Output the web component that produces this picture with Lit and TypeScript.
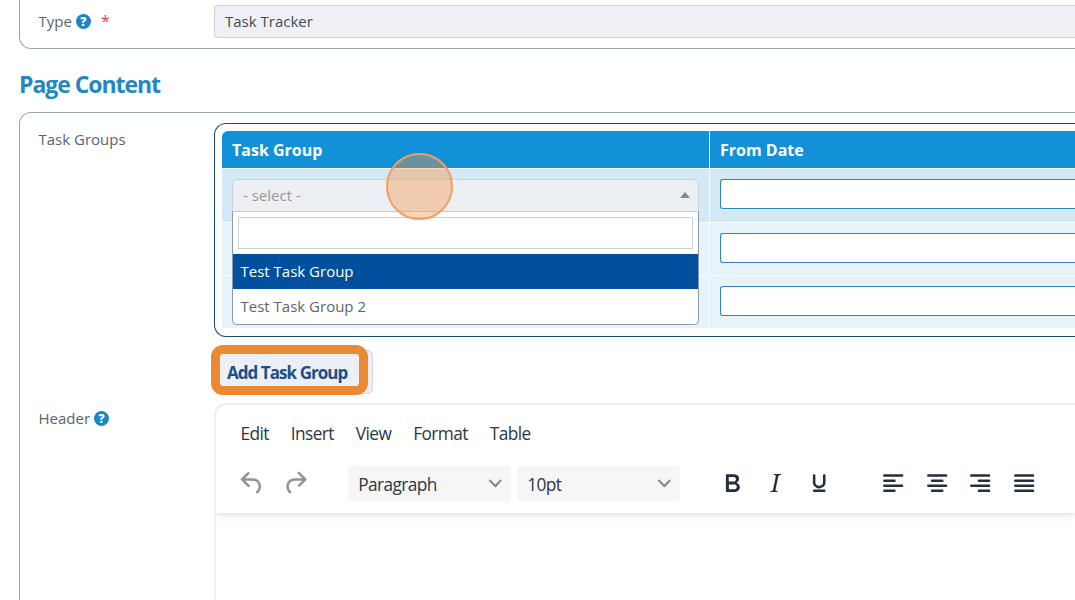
import { LitElement, html, css, svg } from "lit"
import { customElement, property } from "lit/decorators.js"
import { classMap } from "lit/directives/class-map.js"

const ICONS: Record<string, string> = {
  undo: "M6.4 8H12c3.7 0 6.2 2 6.8 5.1.6 2.7-.4 5.6-2.3 6.8a1 1 0 0 1-1-1.8c1.1-.6 1.8-2.7 1.4-4.6-.5-2.1-2.1-3.5-4.9-3.5H6.4l3.3 3.3a1 1 0 1 1-1.4 1.4l-5-5a1 1 0 0 1 0-1.4l5-5a1 1 0 0 1 1.4 1.4L6.4 8Z",
  redo: "M17.6 10H12c-2.8 0-4.4 1.4-4.9 3.5-.4 2 .3 4 1.4 4.6a1 1 0 1 1-1 1.8c-2-1.2-2.9-4.1-2.3-6.8.6-3 3-5.1 6.8-5.1h5.6l-3.3-3.3a1 1 0 1 1 1.4-1.4l5 5a1 1 0 0 1 0 1.4l-5 5a1 1 0 0 1-1.4-1.4l3.3-3.3Z",
  bold: "M7.8 19c-.3 0-.5 0-.6-.2l-.2-.5V5.7c0-.2 0-.4.2-.5l.6-.2h5c1.5 0 2.7.3 3.5 1 .7.6 1.1 1.4 1.1 2.5a3 3 0 0 1-.6 1.9c-.4.6-1 1-1.6 1.2.4.1.9.3 1.3.6s.8.7 1 1.2c.4.4.5 1 .5 1.6 0 1.3-.4 2.3-1.3 3-.8.7-2.1 1-3.8 1H7.8Zm5-8.3c.6 0 1.2-.1 1.6-.5.4-.3.6-.7.6-1.3 0-1.1-.8-1.7-2.3-1.7H9.3v3.5h3.4Zm.5 6c.7 0 1.3-.1 1.7-.4.4-.4.6-.9.6-1.5s-.2-1-.7-1.4c-.4-.3-1-.4-2-.4H9.4v3.8h4Z",
  italic: "m16.7 4.7-.1.9h-.3c-.6 0-1 0-1.4.3-.3.3-.4.6-.5 1.1l-2.1 9.8v.6c0 .5.4.8 1.4.8h.2l-.2.8H8l.2-.8h.2c1.1 0 1.8-.5 2-1.5l2-9.8.1-.5c0-.6-.4-.8-1.4-.8h-.3l.2-.9h5.8Z",
  underline: "M16 5c.6 0 1 .4 1 1v5.5a4 4 0 0 1-.4 1.8l-1 1.4a5.3 5.3 0 0 1-5.5 1 5 5 0 0 1-1.6-1c-.5-.4-.8-.9-1.1-1.4a4 4 0 0 1-.4-1.8V6c0-.6.4-1 1-1s1 .4 1 1v5.5c0 .3 0 .6.2 1l.6.7a3.3 3.3 0 0 0 2.2.8 3.4 3.4 0 0 0 2.2-.8c.3-.2.4-.4.6-.8l.2-.9V6c0-.6.4-1 1-1ZM8 17h8c.6 0 1 .4 1 1s-.4 1-1 1H8a1 1 0 0 1 0-2Z",
  left: "M5 5h14a1 1 0 0 1 0 2H5a1 1 0 1 1 0-2Zm0 4h8a1 1 0 0 1 0 2H5a1 1 0 1 1 0-2Zm0 8h8a1 1 0 0 1 0 2H5a1 1 0 0 1 0-2Zm0-4h14a1 1 0 0 1 0 2H5a1 1 0 0 1 0-2Z",
  center: "M5 5h14a1 1 0 0 1 0 2H5a1 1 0 1 1 0-2Zm3 4h8a1 1 0 0 1 0 2H8a1 1 0 1 1 0-2Zm0 8h8a1 1 0 0 1 0 2H8a1 1 0 0 1 0-2Zm-3-4h14a1 1 0 0 1 0 2H5a1 1 0 0 1 0-2Z",
  right: "M5 5h14a1 1 0 0 1 0 2H5a1 1 0 1 1 0-2Zm6 4h8a1 1 0 0 1 0 2h-8a1 1 0 0 1 0-2Zm0 8h8a1 1 0 0 1 0 2h-8a1 1 0 0 1 0-2Zm-6-4h14a1 1 0 0 1 0 2H5a1 1 0 0 1 0-2Z",
  justify: "M5 5h14a1 1 0 0 1 0 2H5a1 1 0 1 1 0-2Zm0 4h14a1 1 0 0 1 0 2H5a1 1 0 1 1 0-2Zm0 4h14a1 1 0 0 1 0 2H5a1 1 0 0 1 0-2Zm0 4h14a1 1 0 0 1 0 2H5a1 1 0 0 1 0-2Z",
}

@customElement("help-icon")
export class HelpIcon extends LitElement {
  static styles = css`
    :host {
      display: flex;
      align-items: center;
      justify-content: center;
      width: 15px;
      height: 15px;
      margin-top: 1px;
      border-radius: 50%;
      background: #1c86c2;
      color: #fff;
      font: 800 12px/15px "Open Sans", sans-serif;
    }
  `

  render() {
    return html`?`
  }
}

@customElement("rich-editor")
export class RichEditor extends LitElement {
  static styles = css`
    :host {
      display: block;
      box-sizing: border-box;
      border: 2px solid #eee;
      border-right: none;
      border-bottom: none;
      border-top-left-radius: 12px;
      background: #fff;
      color: #2b3744;
      font-family: "Open Sans", sans-serif;
      font-size: 17.3px;
      letter-spacing: -0.6px;
      overflow: hidden;
    }

    .header {
      height: 108px;
      box-shadow: 0 2px 3px rgba(34, 47, 62, 0.08), 0 5px 8px rgba(34, 47, 62, 0.05);
    }

    .menubar {
      display: flex;
      gap: 22px;
      height: 57px;
      padding-left: 24.5px;
      line-height: 57px;
    }

    .toolbar {
      display: flex;
      align-items: center;
      height: 43px;
      padding-left: 14px;
    }

    .group {
      display: flex;
    }

    .group + .group {
      margin-left: 30.5px;
    }

    .tool {
      display: flex;
      justify-content: center;
      width: 43.6px;
    }

    .tool svg {
      width: 30.4px;
      height: 30.4px;
      fill: #222f3e;
    }

    .tool.disabled svg {
      fill: #909498;
    }

    .group.selects {
      gap: 6px;
    }

    .select {
      display: flex;
      align-items: center;
      justify-content: space-between;
      box-sizing: border-box;
      width: 163px;
      height: 35px;
      padding: 0 9px 0 10.5px;
      border-radius: 4px;
      background: #f6f6f7;
    }

    .select span {
      padding-top: 2px;
    }

    .select svg {
      width: 12.7px;
      height: 12.7px;
      fill: #858a91;
    }
  `

  _tool(name: string, disabled = false) {
    return html`
      <div class=${classMap({ tool: true, disabled })}>
        <svg viewBox="0 0 24 24">${svg`<path d=${ICONS[name]} />`}</svg>
      </div>
    `
  }

  _select(label: string) {
    return html`
      <div class="select">
        <span>${label}</span>
        <svg viewBox="0 0 10 10">
          <path d="M8.7 2.2c.3-.3.8-.3 1 0 .4.4.4.9 0 1.2L5.7 7.8c-.3.3-.9.3-1.2 0L.2 3.4a.8.8 0 0 1 0-1.2c.3-.3.8-.3 1.1 0L5 6l3.7-3.8Z" />
        </svg>
      </div>
    `
  }

  render() {
    return html`
      <div class="header">
        <div class="menubar">
          ${["Edit", "Insert", "View", "Format", "Table"].map((m) => html`<span>${m}</span>`)}
        </div>
        <div class="toolbar">
          <div class="group">${this._tool("undo", true)}${this._tool("redo", true)}</div>
          <div class="group selects">${this._select("Paragraph")}${this._select("10pt")}</div>
          <div class="group">${["bold", "italic", "underline"].map((i) => this._tool(i))}</div>
          <div class="group">${["left", "center", "right", "justify"].map((i) => this._tool(i))}</div>
        </div>
      </div>
    `
  }
}

@customElement("group-select")
export class GroupSelect extends LitElement {
  @property({ type: Array }) options: string[] = []
  @property({ type: Number }) active = 0

  static styles = css`
    :host {
      display: block;
      position: relative;
      font-size: 15px;
    }

    .trigger {
      display: flex;
      align-items: center;
      justify-content: space-between;
      box-sizing: border-box;
      height: 33px;
      padding: 0 8px 1px 10px;
      border: 1px solid #cdd3dc;
      border-radius: 4px 4px 0 0;
      background: #eceff4;
      color: #999;
    }

    .arrow {
      border: 5px solid transparent;
      border-top: none;
      border-bottom: 6px solid #888;
    }

    .dropdown {
      position: absolute;
      top: 32px;
      left: 0;
      right: 0;
      z-index: 1;
      box-sizing: border-box;
      height: 114px;
      border: 1px solid #8d9aa5;
      border-top-color: #c3c9d0;
      border-radius: 0 0 5px 5px;
      background: #fff;
      overflow: hidden;
    }

    .search {
      box-sizing: border-box;
      height: 32px;
      margin: 5px;
      border: 1px solid #c9d1d8;
    }

    .option {
      height: 35px;
      padding-left: 7.5px;
      line-height: 35px;
      color: #5f666c;
    }

    .option.active {
      background: #00509d;
      color: #fff;
    }
  `

  render() {
    return html`
      <div class="trigger"><span>- select -</span><span class="arrow"></span></div>
      <div class="dropdown">
        <div class="search"></div>
        ${this.options.map(
          (option, i) => html`
            <div class=${classMap({ option: true, active: i === this.active })}>${option}</div>
          `,
        )}
      </div>
    `
  }
}

@customElement("app-root")
export class AppRoot extends LitElement {
  static styles = css`
    :host {
      display: block;
      position: relative;
      height: 600px;
      overflow: hidden;
      background: #fff;
      color: #5c646b;
      font-family: "Open Sans", sans-serif;
      font-size: 15px;
    }

    .panel {
      box-sizing: border-box;
      margin-left: 19px;
      border-left: 1px solid #98a6ae;
    }

    .panel--top {
      height: 49px;
      padding-top: 5px;
      border-bottom: 1px solid #98a6ae;
      border-bottom-left-radius: 12px;
    }

    .panel--content {
      height: 488px;
      padding-top: 10px;
      border-top: 1px solid #98a6ae;
      border-top-left-radius: 12px;
    }

    .row {
      display: flex;
      align-items: flex-start;
    }

    .label {
      display: flex;
      align-items: center;
      gap: 4px;
      flex: none;
      box-sizing: border-box;
      width: 194px;
      height: 31px;
      padding-left: 18.5px;
    }

    .label--header {
      margin-top: -1px;
    }

    .required {
      margin-left: 6px;
      color: #d9464c;
      font-size: 16px;
    }

    .field {
      flex: 1;
      min-width: 0;
    }

    .readonly {
      box-sizing: border-box;
      height: 33px;
      padding-left: 10px;
      border: 1px solid #cdd1dc;
      border-right: none;
      border-radius: 4px 0 0 4px;
      background: #eef0f5;
      color: #444b52;
      line-height: 31px;
    }

    h2 {
      margin: 0 0 0 19px;
      height: 63px;
      color: #2288c3;
      font-size: 23px;
      font-weight: 700;
      letter-spacing: -1.05px;
      line-height: 71px;
    }

    .table {
      box-sizing: border-box;
      height: 214px;
      padding: 7px 0 0 7px;
      border: 1px solid #1d4a68;
      border-right: none;
      border-radius: 12px 0 0 12px;
    }

    .grid {
      display: grid;
      grid-template-columns: 487px 1fr;
      grid-template-rows: 37px 53px 52px 52px;
      gap: 1px;
    }

    .head {
      padding-left: 10px;
      background: #1291d9;
      color: #fff;
      font-size: 16px;
      font-weight: 700;
      line-height: 38px;
    }

    .head:first-child {
      border-top-left-radius: 6px;
    }

    .cell {
      padding: 10px 0 0 10px;
      background: #e7f3fa;
    }

    .cell.selected {
      background: #d3e9f5;
    }

    .date {
      box-sizing: border-box;
      height: 30px;
      border: 1px solid #2f86b4;
      border-right: none;
      border-radius: 3px 0 0 3px;
      background: #fff;
    }

    group-select {
      width: 467px;
    }

    .actions {
      position: relative;
      box-sizing: border-box;
      height: 66px;
      padding-top: 13px;
    }

    .add {
      box-sizing: border-box;
      width: 159px;
      height: 44px;
      padding-left: 12px;
      border: 1px solid #d3d6e2;
      border-radius: 5px;
      background: #eceff6;
      color: #1b4f86;
      font-size: 17px;
      font-weight: 700;
      letter-spacing: -0.95px;
      line-height: 43px;
      white-space: nowrap;
    }

    .highlight {
      position: absolute;
      top: 8px;
      left: -3px;
      box-sizing: border-box;
      width: 157px;
      height: 50px;
      border: 9.5px solid #ec8a33;
      border-radius: 12px;
    }

    .pointer {
      position: absolute;
      top: 153px;
      left: 385.5px;
      z-index: 2;
      box-sizing: border-box;
      width: 67px;
      height: 67px;
      border: 2px solid #f0a062;
      border-radius: 50%;
      background: rgba(246, 145, 62, 0.38);
    }

    rich-editor {
      height: 200px;
    }
  `

  render() {
    return html`
      <section class="panel panel--top">
        <div class="row">
          <div class="label">
            Type <help-icon></help-icon><span class="required">*</span>
          </div>
          <div class="field readonly">Task Tracker</div>
        </div>
      </section>

      <h2>Page Content</h2>

      <section class="panel panel--content">
        <div class="row">
          <div class="label">Task Groups</div>
          <div class="field">
            <div class="table">
              <div class="grid">
                <div class="head">Task Group</div>
                <div class="head">From Date</div>
                ${[0, 1, 2].map(
                  (i) => html`
                    <div class=${classMap({ cell: true, selected: i === 0 })}>
                      ${i === 0
                        ? html`<group-select .options=${["Test Task Group", "Test Task Group 2"]}></group-select>`
                        : ""}
                    </div>
                    <div class=${classMap({ cell: true, selected: i === 0 })}>
                      <div class="date"></div>
                    </div>
                  `,
                )}
              </div>
            </div>
            <div class="actions">
              <div class="add">Add Task Group</div>
              <div class="highlight"></div>
            </div>
          </div>
        </div>
        <div class="row">
          <div class="label label--header">Header <help-icon></help-icon></div>
          <rich-editor class="field"></rich-editor>
        </div>
      </section>

      <div class="pointer"></div>
    `
  }
}
